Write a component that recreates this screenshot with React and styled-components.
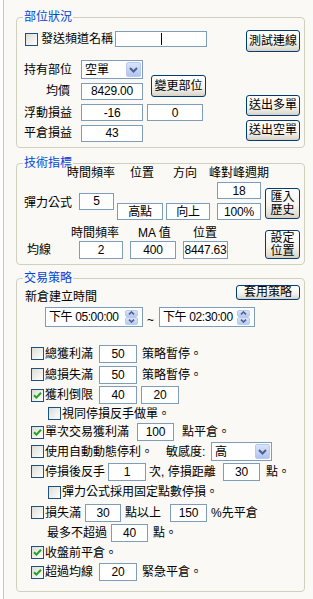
import React from "react";
import styled, { createGlobalStyle } from "styled-components";

const FONT = `"Liberation Sans", "Noto Sans CJK TC", sans-serif`;

const Global = createGlobalStyle`
  html, body { margin: 0; padding: 0; background: #fff; }
  body { font-family: ${FONT}; font-size: 12px; color: #000; }
  * { box-sizing: border-box; }
`;

const Page = styled.div`
  width: 310px;
  min-height: 599px;
  margin-left: 3px;
  border-left: 1px solid #cac8bc;
  background: #faf9f5;
  padding: 10px 8px 0 12px;
`;

const Group = styled.fieldset`
  margin: ${(p) => p.$mt || 0}px 0 0;
  padding: 0;
  border: 1px solid #d0d0bf;
  border-radius: 4px;
  min-width: 0;
`;

const Legend = styled.legend`
  margin-left: 6px;
  padding: 0 1px;
  line-height: 14px;
  font-size: 12px;
  color: #0046d5;
`;

const gridPos = (p) => `
  ${p.$at ? `grid-area: ${p.$at};` : ""}
  ${p.$self ? `align-self: ${p.$self};` : ""}
`;

const Button = styled.button`
  ${gridPos}
  width: ${(p) => p.$w}px;
  height: ${(p) => p.$h}px;
  margin: ${(p) => p.$m || 0};
  padding: 0;
  border: 1px solid #003c74;
  border-radius: 3px;
  background: linear-gradient(180deg, #ffffff 0%, #f5f4ef 55%, #e3e0d6 85%, #d6d0c5 100%);
  font: 12px/13px ${FONT};
  color: #000;
`;

const Field = styled.div`
  ${gridPos}
  width: ${(p) => p.$w}px;
  height: ${(p) => p.$h || 17}px;
  margin-left: ${(p) => p.$ml || 0}px;
  border: 1px solid #7f9db9;
  background: #fff;
  display: flex;
  align-items: center;
  justify-content: center;
  line-height: 14px;
  white-space: nowrap;
  letter-spacing: -0.2px;
`;

const Caret = styled.span`
  width: 1px;
  height: 12px;
  background: #000;
`;

const Lbl = styled.div`
  ${gridPos}
  padding-left: ${(p) => p.$pl || 0}px;
  margin-top: ${(p) => p.$mt || 0}px;
  line-height: 14px;
  white-space: nowrap;
`;

const Txt = styled.span`
  flex: none;
  width: ${(p) => (p.$w ? `${p.$w}px` : "auto")};
  margin-left: ${(p) => p.$ml || 0}px;
  line-height: 14px;
  white-space: nowrap;
`;

const Head = styled.div`
  ${gridPos}
  margin-left: ${(p) => p.$ml || 0}px;
  line-height: 12px;
  white-space: nowrap;
`;

const Box = styled.span`
  flex: none;
  width: 13px;
  height: 13px;
  margin-right: 1px;
  border: 1px solid #1c5180;
  background: linear-gradient(135deg, #dcdcd7 0%, #f4f4f1 70%, #ffffff 100%);
  display: flex;
  align-items: center;
  justify-content: center;
`;

const Check = ({ on }) => (
  <Box>
    {on && (
      <svg width="9" height="9" viewBox="0 0 9 9">
        <path d="M1 4.2 L3.4 6.6 L8 1.8" stroke="#21a121" strokeWidth="2" fill="none" />
      </svg>
    )}
  </Box>
);

const Combo = styled.div`
  flex: none;
  width: ${(p) => p.$w}px;
  height: ${(p) => p.$h}px;
  border: 1px solid #7f9db9;
  background: #fff;
  display: flex;
  align-items: center;
  padding-left: 3px;
  line-height: 14px;
`;

const DropBtn = styled.span`
  flex: none;
  width: 15px;
  align-self: stretch;
  margin: 1px 1px 1px auto;
  border: 1px solid #b9caf0;
  border-radius: 2px;
  background: linear-gradient(180deg, #dae3fb 0%, #c1d1f7 60%, #b0c4f2 100%);
  display: flex;
  align-items: center;
  justify-content: center;
`;

const Drop = () => (
  <DropBtn>
    <svg width="9" height="6" viewBox="0 0 9 6">
      <path d="M1 1 L4.5 4.5 L8 1" stroke="#4d6185" strokeWidth="2" fill="none" />
    </svg>
  </DropBtn>
);

/* 部位狀況 */
const Body1 = styled.div`
  display: flex;
  justify-content: space-between;
  padding: 6px 4px 4px 7px;
`;

const LeftCol = styled.div`
  display: flex;
  flex-direction: column;
`;

const ChanRow = styled.div`
  display: flex;
  align-items: center;
  height: 18px;
  padding-left: 1px;
  & > ${Box} { margin-right: 3px; }
`;

const PosGrid = styled.div`
  margin-top: 11px;
  display: grid;
  grid-template-columns: 57px 62px auto;
  grid-template-rows: 21px 22px 21px 20px;
  align-items: center;
`;

const RightCol = styled.div`
  display: flex;
  flex-direction: column;
  gap: 4px;
  padding-bottom: 2px;
  & > :nth-child(2) { margin-top: auto; }
`;

/* 技術指標 */
const Body2 = styled.div`
  padding: 0 4px 5px 0;
`;

const HeadRow = styled.div`
  display: flex;
  height: 12px;
  margin-top: -3px;
`;

const IndGrid = styled.div`
  margin-top: 3px;
  display: grid;
  grid-template-columns: 62px 38px 49px 51px 48px 35px;
  grid-template-rows: 17px 17px;
  row-gap: 4px;
  align-items: center;
`;

const MaGrid = styled.div`
  margin-top: 7px;
  display: grid;
  grid-template-columns: 62px 51px 53px 82px 35px;
  grid-template-rows: 12px 19px;
  row-gap: 1px;
  align-items: center;
`;

/* 交易策略 */
const Body3 = styled.div`
  padding: 0 4px 9px 0;
`;

const TopRow = styled.div`
  display: flex;
  justify-content: space-between;
  align-items: flex-start;
  padding-left: 8px;
`;

const TimeRow = styled.div`
  display: flex;
  align-items: center;
  height: 20px;
  margin-top: 3px;
  padding-left: 28px;
  margin-bottom: 16px;
`;

const Picker = styled.div`
  flex: none;
  width: ${(p) => p.$w}px;
  height: 20px;
  border: 1px solid #7f9db9;
  background: #fff;
  display: flex;
  align-items: center;
  padding-left: 3px;
  line-height: 14px;
  white-space: nowrap;
  letter-spacing: -0.4px;
`;

const Spin = styled.span`
  flex: none;
  margin: 0 4px 0 auto;
  width: 13px;
  height: 15px;
  display: flex;
  flex-direction: column;
`;

const SpinHalf = styled.span`
  flex: 1;
  border: 1px solid #b9caf0;
  border-radius: 2px;
  background: linear-gradient(180deg, #dae3fb 0%, #b8cbf4 100%);
  display: flex;
  align-items: center;
  justify-content: center;
`;

const Spinner = () => (
  <Spin>
    <SpinHalf>
      <svg width="7" height="4" viewBox="0 0 7 4">
        <path d="M1 3.4 L3.5 1 L6 3.4" stroke="#4d6185" strokeWidth="1.6" fill="none" />
      </svg>
    </SpinHalf>
    <SpinHalf>
      <svg width="7" height="4" viewBox="0 0 7 4">
        <path d="M1 0.6 L3.5 3 L6 0.6" stroke="#4d6185" strokeWidth="1.6" fill="none" />
      </svg>
    </SpinHalf>
  </Spin>
);

const Tilde = styled.span`
  margin: 0 5px 0 4px;
  padding-top: 6px;
  line-height: 14px;
`;

const OptRow = styled.div`
  display: flex;
  align-items: center;
  height: ${(p) => p.$h}px;
  padding-left: ${(p) => p.$in || 14}px;
`;

export default function App() {
  return (
    <>
      <Global />
      <Page>
        <Group>
          <Legend>部位狀況</Legend>
          <Body1>
            <LeftCol>
              <ChanRow>
                <Check />
                <Txt>發送頻道名稱</Txt>
                <Field $w={92} $h={16} $ml={2}>
                  <Caret />
                </Field>
              </ChanRow>
              <PosGrid>
                <Lbl>持有部位</Lbl>
                <Combo $w={62} $h={19}>
                  空單
                  <Drop />
                </Combo>
                <Button $at="1 / 3 / 3 / 4" $self="end" $w={55} $h={22} $m="0 0 5px 8px">
                  變更部位
                </Button>
                <Lbl $pl={22}>均價</Lbl>
                <Field $w={62}>8429.00</Field>
                <Lbl>浮動損益</Lbl>
                <Field $w={62}>-16</Field>
                <Field $w={56} $ml={4}>0</Field>
                <Lbl>平倉損益</Lbl>
                <Field $w={62}>43</Field>
              </PosGrid>
            </LeftCol>
            <RightCol>
              <Button $w={54} $h={22}>測試連線</Button>
              <Button $w={54} $h={21}>送出多單</Button>
              <Button $w={54} $h={21}>送出空單</Button>
            </RightCol>
          </Body1>
        </Group>

        <Group $mt={8}>
          <Legend>技術指標</Legend>
          <Body2>
            <HeadRow>
              <Head $ml={50}>時間頻率</Head>
              <Head $ml={15}>位置</Head>
              <Head $ml={19}>方向</Head>
              <Head $ml={12}>峰對峰週期</Head>
            </HeadRow>
            <IndGrid>
              <Lbl $at="1 / 1 / 3 / 2" $pl={7} $mt={4}>彈力公式</Lbl>
              <Field $at="1 / 2 / 3 / 3" $w={35}>5</Field>
              <Field $at="2 / 3" $w={46}>高點</Field>
              <Field $at="2 / 4" $w={44}>向上</Field>
              <Field $at="1 / 5" $w={44}>18</Field>
              <Field $at="2 / 5" $w={44}>100%</Field>
              <Button $at="1 / 6 / 3 / 7" $self="end" $w={35} $h={31} $m="0 0 1px 0">
                匯入
                <br />
                歷史
              </Button>
            </IndGrid>
            <MaGrid>
              <Head $at="1 / 2" $ml={-8}>時間頻率</Head>
              <Head $at="1 / 3" $ml={8}>MA 值</Head>
              <Head $at="1 / 4" $ml={10}>位置</Head>
              <Lbl $at="2 / 1" $pl={10}>均線</Lbl>
              <Field $at="2 / 2" $w={44} $h={18}>2</Field>
              <Field $at="2 / 3" $w={46} $h={18}>400</Field>
              <Field $at="2 / 4" $w={45} $h={18}>8447.63</Field>
              <Button $at="1 / 5 / 3 / 6" $self="end" $w={35} $h={29}>
                設定
                <br />
                位置
              </Button>
            </MaGrid>
          </Body2>
        </Group>

        <Group $mt={6}>
          <Legend>交易策略</Legend>
          <Body3>
            <TopRow>
              <Lbl $mt={5}>新倉建立時間</Lbl>
              <Button $w={64} $h={15}>套用策略</Button>
            </TopRow>
            <TimeRow>
              <Picker $w={98}>
                下午 05:00:00
                <Spinner />
              </Picker>
              <Tilde>~</Tilde>
              <Picker $w={96}>
                下午 02:30:00
                <Spinner />
              </Picker>
            </TimeRow>

            <OptRow $h={21}>
              <Check />
              <Txt $w={54}>總獲利滿</Txt>
              <Field $w={38} $h={18}>50</Field>
              <Txt $ml={5}>策略暫停。</Txt>
            </OptRow>
            <OptRow $h={21}>
              <Check />
              <Txt $w={54}>總損失滿</Txt>
              <Field $w={38} $h={18}>50</Field>
              <Txt $ml={5}>策略暫停。</Txt>
            </OptRow>
            <OptRow $h={20}>
              <Check on />
              <Txt $w={54}>獲利倒限</Txt>
              <Field $w={38} $h={18}>40</Field>
              <Field $w={38} $h={18} $ml={4}>20</Field>
            </OptRow>
            <OptRow $h={17} $in={31}>
              <Check />
              <Txt>視同停損反手做單。</Txt>
            </OptRow>
            <OptRow $h={20}>
              <Check on />
              <Txt $w={92}>單次交易獲利滿</Txt>
              <Field $w={37} $h={18}>100</Field>
              <Txt $ml={8}>點平倉。</Txt>
            </OptRow>
            <OptRow $h={19}>
              <Check />
              <Txt $w={121}>使用自動動態停利。</Txt>
              <Txt $w={45}>敏感度:</Txt>
              <Combo $w={61} $h={19}>
                高
                <Drop />
              </Combo>
            </OptRow>
            <OptRow $h={21}>
              <Check />
              <Txt $w={63}>停損後反手</Txt>
              <Field $w={38} $h={18}>1</Field>
              <Txt $w={74} $ml={3}>次, 停損距離</Txt>
              <Field $w={37} $h={18}>30</Field>
              <Txt $ml={6}>點。</Txt>
            </OptRow>
            <OptRow $h={20} $in={31}>
              <Check />
              <Txt>彈力公式採用固定點數停損。</Txt>
            </OptRow>
            <OptRow $h={21}>
              <Check />
              <Txt $w={40}>損失滿</Txt>
              <Field $w={36} $h={18}>30</Field>
              <Txt $w={45} $ml={4}>點以上</Txt>
              <Field $w={37} $h={18}>150</Field>
              <Txt $ml={4}>%先平倉</Txt>
            </OptRow>
            <OptRow $h={20} $in={30}>
              <Txt $w={64}>最多不超過</Txt>
              <Field $w={37} $h={18}>40</Field>
              <Txt $ml={5}>點。</Txt>
            </OptRow>
            <OptRow $h={19}>
              <Check on />
              <Txt>收盤前平倉。</Txt>
            </OptRow>
            <OptRow $h={20}>
              <Check on />
              <Txt $w={54}>超過均線</Txt>
              <Field $w={38} $h={18}>20</Field>
              <Txt $ml={5}>緊急平倉。</Txt>
            </OptRow>
          </Body3>
        </Group>
      </Page>
    </>
  );
}
